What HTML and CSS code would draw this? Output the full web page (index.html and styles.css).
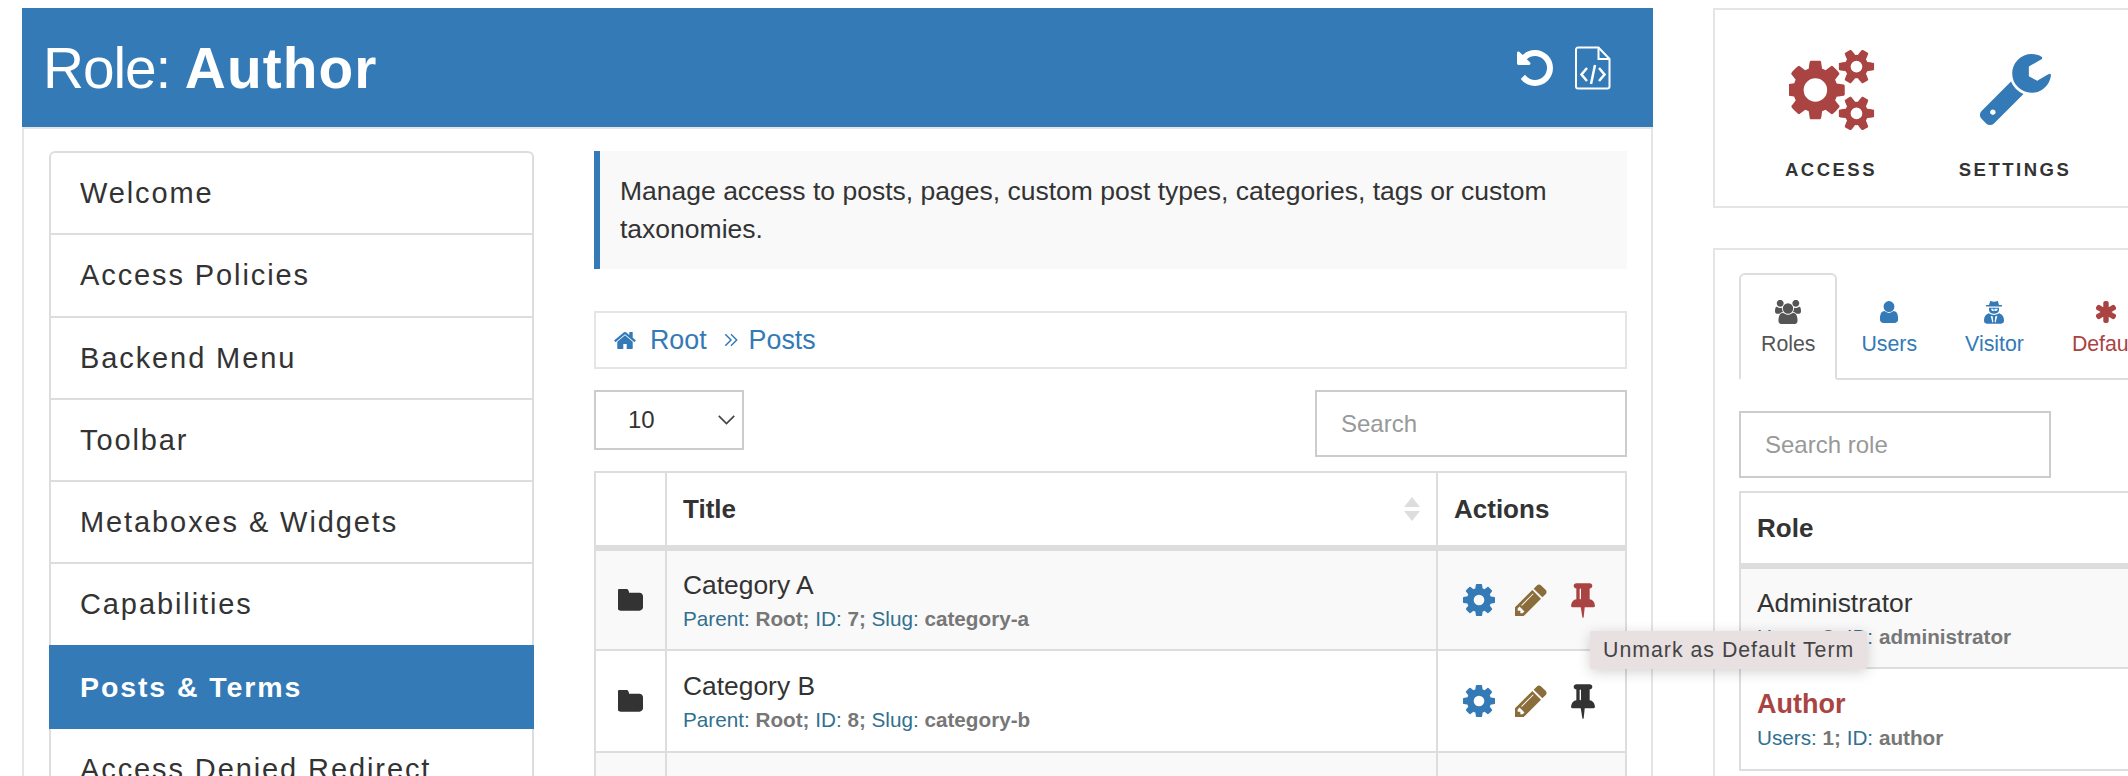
FILE: index.html
```html
<!DOCTYPE html>
<html lang="en">
<head>
  <meta charset="UTF-8">
  <title>Role: Author</title>
  <link rel="stylesheet" href="styles.css">
</head>
<body>
  <svg class="sprite" xmlns="http://www.w3.org/2000/svg">
    <symbol id="i-cog" viewBox="128 128 1536 1536"><path d="M1152 896q0-106-75-181t-181-75-181 75-75 181 75 181 181 75 181-75 75-181zm512-109v222q0 12-8 23t-20 13l-185 28q-19 54-39 91 35 50 107 138 10 12 10 25t-9 23q-27 37-99 108t-94 71q-12 0-26-9l-138-108q-44 23-91 38-16 136-29 186-7 28-36 28h-222q-14 0-24.500-8.500t-11.500-21.500l-28-184q-49-16-90-37l-141 107q-10 9-25 9-14 0-25-11-126-114-165-168-7-10-7-23 0-12 8-23 15-21 51-66.500t54-70.500q-27-50-41-99l-183-27q-13-2-21-12.500t-8-23.500v-222q0-12 8-23t19-13l186-28q14-46 39-92-40-57-107-138-10-12-10-24 0-10 9-23 26-36 98.500-107.500t94.500-71.500q13 0 26 10l138 107q44-23 91-38 16-136 29-186 7-28 36-28h222q14 0 24.500 8.500t11.500 21.500l28 184q49 16 90 37l142-107q9-9 24-9 13 0 25 10 129 119 165 170 7 8 7 22 0 12-8 23-15 21-51 66.500t-54 70.500q26 50 41 98l183 28q13 2 21 12.500t8 23.500z"/></symbol>
    <symbol id="i-pencil" viewBox="128 128 1536 1536"><path d="M491 1536l91-91-235-235-91 91v107h128v128h107zm523-928q0-22-22-22-10 0-17 7l-542 542q-7 7-7 17 0 22 22 22 10 0 17-7l542-542q7-7 7-17zm-54-192l416 416-832 832h-416v-416zm683 96q0 53-37 90l-166 166-416-416 166-165q36-38 90-38 53 0 91 38l235 234q37 39 37 91z"/></symbol>
    <symbol id="i-pin" viewBox="0 128 1152 1664"><path d="M480 864v-448q0-14-9-23t-23-9-23 9-9 23v448q0 14 9 23t23 9 23-9 9-23zm672 352q0 26-19 45t-45 19h-429l-51 483q-2 12-10.500 20.500t-20.500 8.500h-1q-27 0-32-27l-76-485h-404q-26 0-45-19t-19-45q0-123 78.500-221.500t177.500-98.500v-512q-52 0-90-38t-38-90 38-90 90-38h640q52 0 90 38t38 90-38 90-90 38v512q99 0 177.500 98.500t78.500 221.500z"/></symbol>
    <symbol id="i-folder" viewBox="0 192 1664 1408"><path d="M1600 648v704q0 92-66 158t-158 66h-1216q-92 0-158-66t-66-158v-960q0-92 66-158t158-66h320q92 0 158 66t66 158v32h672q92 0 158 66t66 158z"/></symbol>
    <symbol id="i-home" viewBox="0 192 1792 1408"><path d="M1472 992v480q0 26-19 45t-45 19h-384v-384h-256v384h-384q-26 0-45-19t-19-45v-480q0-1 .5-3t.5-3l575-474 575 474q1 2 1 6zm223-69l-62 74q-8 9-21 11h-3q-13 0-21-7l-692-577-692 577q-12 8-24 7-13-2-21-11l-62-74q-8-10-7-23.500t11-21.500l719-599q32-26 76-26t76 26l244 204v-195q0-14 9-23t23-9h192q14 0 23 9t9 23v408l219 182q10 8 11 21.500t-7 23.500z"/></symbol>
    <symbol id="i-undo" viewBox="128 128 1536 1536"><path d="M1664 896q0 156-61 298t-164 245-245 164-298 61q-172 0-327-72.500t-264-204.500q-7-10-6.500-22.500t8.500-20.500l137-138q10-9 25-9 16 2 23 12 73 95 179 147t225 52q104 0 198.500-40.500t163.500-109.500 109.500-163.500 40.500-198.500-40.500-198.500-109.500-163.500-163.500-109.500-198.500-40.500q-98 0-188 35.500t-160 101.500l137 138q31 30 14 69-17 40-59 40h-448q-26 0-45-19t-19-45v-448q0-42 40-59 39-17 69 14l130 129q107-101 244.500-156.500t284.500-55.500q156 0 298 61t245 164 164 245 61 298z"/></symbol>
    <symbol id="i-cogs" viewBox="0 128 1920 1536"><path d="M832 896q0-106-75-181t-181-75-181 75-75 181 75 181 181 75 181-75 75-181zm768 512q0-52-38-90t-90-38-90 38-38 90q0 53 37.500 90.500t90.500 37.500 90.500-37.500 37.500-90.500zm0-1024q0-52-38-90t-90-38-90 38-38 90q0 53 37.500 90.500t90.500 37.500 90.500-37.500 37.500-90.500zm-384 421v185q0 10-7 19.500t-16 10.500l-155 24q-11 35-32 76 34 48 90 115 7 11 7 20 0 12-7 19-23 30-82.500 89.500t-78.500 59.500q-11 0-21-7l-115-90q-37 19-77 31-11 108-23 155-7 24-30 24h-186q-11 0-20-7.500t-10-17.500l-23-153q-34-10-75-31l-118 89q-7 7-20 7-11 0-21-8-144-133-144-160 0-9 7-19 10-14 41-53t47-61q-23-44-35-82l-152-24q-10-1-17-9.500t-7-19.500v-185q0-10 7-19.500t16-10.500l155-24q11-35 32-76-34-48-90-115-7-11-7-20 0-12 7-20 22-30 82-89t79-59q11 0 21 7l115 90q34-18 77-32 11-108 23-154 7-24 30-24h186q11 0 20 7.500t10 17.500l23 153q34 10 75 31l118-89q8-7 20-7 11 0 21 8 144 133 144 160 0 8-7 19-12 16-42 54t-45 60q23 48 34 82l152 23q10 2 17 10.500t7 19.500zm640 533v140q0 16-149 31-12 27-30 52 51 113 51 138 0 4-4 7-122 71-124 71-8 0-46-47t-52-68q-20 2-30 2t-30-2q-14 21-52 68t-46 47q-2 0-124-71-4-3-4-7 0-25 51-138-18-25-30-52-149-15-149-31v-140q0-16 149-31 13-29 30-52-51-113-51-138 0-4 4-7 4-2 35-20t59-34 30-16q8 0 46 46.500t52 67.500q20-2 30-2t30 2q51-71 92-112l6-2q4 0 124 70 4 3 4 7 0 25-51 138 17 23 30 52 149 15 149 31zm0-1024v140q0 16-149 31-12 27-30 52 51 113 51 138 0 4-4 7-122 71-124 71-8 0-46-47t-52-68q-20 2-30 2t-30-2q-14 21-52 68t-46 47q-2 0-124-71-4-3-4-7 0-25 51-138-18-25-30-52-149-15-149-31v-140q0-16 149-31 13-29 30-52-51-113-51-138 0-4 4-7 4-2 35-20t59-34 30-16q8 0 46 46.500t52 67.500q20-2 30-2t30 2q51-71 92-112l6-2q4 0 124 70 4 3 4 7 0 25-51 138 17 23 30 52 149 15 149 31z"/></symbol>
    <symbol id="i-wrench" viewBox="64 128 1664 1664"><path d="M448 1472q0-26-19-45t-45-19-45 19-19 45 19 45 45 19 45-19 19-45zm644-420l-682 682q-37 37-90 37-52 0-91-37l-106-108q-38-36-38-90 0-53 38-91l681-681q39 98 114.500 173.500t173.500 114.500zm634-435q0 39-23 106-47 134-164.500 217.500t-258.500 83.500q-185 0-316.500-131.500t-131.500-316.500 131.500-316.500 316.500-131.500q58 0 121.500 16.500t107.500 46.500q16 11 16 28t-16 28l-293 169v224l193 107q5-3 79-48.500t135.500-81 70.500-35.500q15 0 23.500 10t8.500 25z"/></symbol>
    <symbol id="i-users" viewBox="0 128 1920 1536"><path d="M593 896q-162 5-265 128h-134q-82 0-138-40.500t-56-118.500q0-353 124-353 6 0 43.500 21t97.500 42.500 119 21.500q67 0 133-23-5 37-5 66 0 139 81 256zm1071 637q0 120-73 189.500t-194 69.500h-874q-121 0-194-69.500t-73-189.500q0-53 3.500-103.500t14-109 26.500-108.500 43-97.500 62-81 85.500-53.500 111.500-20q10 0 43 21.500t73 48 107 48 135 21.500 135-21.500 107-48 73-48 43-21.500q61 0 111.500 20t85.500 53.500 62 81 43 97.500 26.500 108.500 14 109 3.500 103.500zm-1024-1277q0 106-75 181t-181 75-181-75-75-181 75-181 181-75 181 75 75 181zm704 384q0 159-112.500 271.500t-271.500 112.500-271.500-112.500-112.500-271.500 112.500-271.500 271.500-112.500 271.500 112.500 112.500 271.500zm576 225q0 78-56 118.500t-138 40.500h-134q-103-123-265-128 81-117 81-256 0-29-5-66 66 23 133 23 59 0 119-21.500t97.500-42.500 43.500-21q124 0 124 353zm-128-609q0 106-75 181t-181 75-181-75-75-181 75-181 181-75 181 75 75 181z"/></symbol>
    <symbol id="i-user" viewBox="128 128 1408 1536"><path d="M1536 1399q0 109-62.500 187t-150.500 78h-854q-88 0-150.500-78t-62.500-187q0-85 8.500-160.500t31.500-152 58.500-131 94-89 134.500-34.500q131 128 313 128t313-128q76 0 134.500 34.500t94 89 58.500 131 31.500 152 8.500 160.500zm-256-887q0 159-112.500 271.500t-271.500 112.500-271.500-112.500-112.500-271.500 112.500-271.500 271.500-112.500 271.500 112.500 112.500 271.500z" transform="translate(-64 0)"/></symbol>
    <symbol id="i-secret" viewBox="0 0 24 28"><path fill-rule="evenodd" d="M7.500 .5C9 1.200 10.500 1.600 12 1.600S15 1.200 16.500 .5L18 5.500h3.500v2h-19v-2H6zM6 8.800h12v2.700c0 2.700-2.500 4.700-6 4.700s-6-2-6-4.700zM7.600 10.200h3.400l.5 1h1l.5-1h3.400c0 1.600-1 2.700-2.200 2.700-.8 0-1.300-.7-1.800-.7s-1 .7-1.800.7c-1.200 0-2-1.100-2-2.700zM5.800 15.500C8 17 10 17.500 12 17.500s4-.5 6.200-2c3.500 1 5.800 3.800 5.800 8.500 0 2.500-1 4-3.500 4h-17C1 28 0 26.500 0 24c0-4.700 2.300-7.500 5.800-8.500zM8 18.800l2.400.3.8 6.700-1 1zM16 18.800l-2.400.3-.8 6.700 1 1z"/></symbol>
    <symbol id="i-asterisk" viewBox="192 128 1408 1536"><path d="M1546 1050q46 26 59.500 77.500t-12.500 97.500l-64 110q-26 46-77.500 59.500t-97.500-12.500l-266-153v307q0 52-38 90t-90 38h-128q-52 0-90-38t-38-90v-307l-266 153q-46 26-97.500 12.500t-77.500-59.500l-64-110q-26-46-12.500-97.500t59.500-77.500l266-154-266-154q-46-26-59.500-77.500t12.500-97.500l64-110q26-46 77.500-59.500t97.500 12.500l266 153v-307q0-52 38-90t90-38h128q52 0 90 38t38 90v307l266-153q46-26 97.500-12.500t77.500 59.500l64 110q26 46 12.500 97.500t-59.500 77.500l-266 154z"/></symbol>
  </svg>

  <div class="page">
    <div class="main-panel">
      <div class="role-head">
        <h1>Role: <strong>Author</strong></h1>
        <div class="head-actions">
          <svg class="icon-undo"><use href="#i-undo"/></svg>
          <svg class="icon-file" viewBox="0 0 36 44" fill="none" stroke="#fff" stroke-width="2">
            <path d="M3 1.500h20.500l11 11.500v27.500a2 2 0 0 1-2 2H3a2 2 0 0 1-2-2v-37a2 2 0 0 1 2-2z"/>
            <path d="M23.500 1.500v11.500h11" stroke-width="2"/>
            <path d="M12 22l-5.500 6.500 5.500 6.500M24 22l5.500 6.500-5.500 6.500M20 19l-4 19" stroke-width="2.500"/>
          </svg>
        </div>
      </div>
      <div class="panel-body">
        <ul class="side-menu">
          <li>Welcome</li>
          <li>Access Policies</li>
          <li>Backend Menu</li>
          <li>Toolbar</li>
          <li>Metaboxes &amp; Widgets</li>
          <li>Capabilities</li>
          <li class="active">Posts &amp; Terms</li>
          <li>Access Denied Redirect</li>
        </ul>
        <div class="content">
          <p class="notice">Manage access to posts, pages, custom post types, categories, tags or custom taxonomies.</p>
          <div class="crumbs">
            <svg class="icon-home"><use href="#i-home"/></svg>
            <span>Root</span>
            <svg class="icon-sep" viewBox="0 0 14 14" fill="none" stroke="#337ab7" stroke-width="1.300"><path d="M2 2l5 5-5 5M7 2l5 5-5 5"/></svg>
            <span>Posts</span>
          </div>
          <div class="table-tools">
            <div class="fake-select">10
              <svg viewBox="0 0 16 10" fill="none" stroke="#444" stroke-width="1.400"><path d="M1.500 1.500L8 8l6.500-6.500"/></svg>
            </div>
            <input class="search" type="text" placeholder="Search">
          </div>
          <table class="grid">
            <thead>
              <tr>
                <th class="col-icon"></th>
                <th class="col-title">Title
                  <span class="sort"><i class="up"></i><i class="down"></i></span>
                </th>
                <th class="col-actions">Actions</th>
              </tr>
            </thead>
            <tbody>
              <tr class="odd">
                <td class="cell-icon"><svg class="icon-folder"><use href="#i-folder"/></svg></td>
                <td>
                  <div class="name">Category A</div>
                  <small>Parent: <b>Root;</b> ID: <b>7;</b> Slug: <b>category-a</b></small>
                </td>
                <td>
                  <div class="actions">
                    <svg class="act blue"><use href="#i-cog"/></svg>
                    <svg class="act brown"><use href="#i-pencil"/></svg>
                    <svg class="act-pin red"><use href="#i-pin"/></svg>
                  </div>
                </td>
              </tr>
              <tr>
                <td class="cell-icon"><svg class="icon-folder"><use href="#i-folder"/></svg></td>
                <td>
                  <div class="name">Category B</div>
                  <small>Parent: <b>Root;</b> ID: <b>8;</b> Slug: <b>category-b</b></small>
                </td>
                <td>
                  <div class="actions">
                    <svg class="act blue"><use href="#i-cog"/></svg>
                    <svg class="act brown"><use href="#i-pencil"/></svg>
                    <svg class="act-pin dark"><use href="#i-pin"/></svg>
                  </div>
                </td>
              </tr>
              <tr class="odd">
                <td class="cell-icon"></td>
                <td>
                  <div class="name">Uncategorized</div>
                  <small>Parent: <b>Root;</b> ID: <b>1;</b> Slug: <b>uncategorized</b></small>
                </td>
                <td></td>
              </tr>
            </tbody>
          </table>
        </div>
      </div>
    </div>

    <div class="side-col">
      <div class="card nav-card">
        <div class="nav-item">
          <svg class="icon-cogs"><use href="#i-cogs"/></svg>
          <span>ACCESS</span>
        </div>
        <div class="nav-item">
          <svg class="icon-wrench"><use href="#i-wrench"/></svg>
          <span>SETTINGS</span>
        </div>
      </div>
      <div class="card subject-card">
        <div class="tabs">
          <div class="tab current"><svg class="tab-users"><use href="#i-users"/></svg>Roles</div>
          <div class="tab"><svg class="tab-user"><use href="#i-user"/></svg>Users</div>
          <div class="tab"><svg class="tab-secret"><use href="#i-secret"/></svg>Visitor</div>
          <div class="tab danger"><svg class="tab-star"><use href="#i-asterisk"/></svg>Default</div>
        </div>
        <input class="search role-search" type="text" placeholder="Search role">
        <table class="grid role-grid">
          <thead>
            <tr><th>Role</th></tr>
          </thead>
          <tbody>
            <tr class="odd">
              <td>
                <div class="name">Administrator</div>
                <small>Users: <b>2;</b> ID: <b>administrator</b></small>
              </td>
            </tr>
            <tr>
              <td>
                <div class="name current-role">Author</div>
                <small>Users: <b>1;</b> ID: <b>author</b></small>
              </td>
            </tr>
          </tbody>
        </table>
      </div>
    </div>
  </div>

  <div class="tip">Unmark as Default Term</div>
</body>
</html>
```

FILE: styles.css
```css
html, body {
  height: 100%;
  overflow: hidden;
}
body {
  margin: 0;
  font-family: "Liberation Sans", Arial, sans-serif;
  font-size: 24px;
  color: #333;
  background: #fff;
}
.sprite {
  display: none;
}
.page {
  display: flex;
  gap: 60px;
  padding: 8px 0 0 22px;
  width: 2800px;
}

/* main panel */
.main-panel {
  width: 1631px;
  flex: none;
  border: 2px solid #e5e5e5;
  border-top: 0;
  box-sizing: border-box;
}
.role-head {
  display: flex;
  align-items: center;
  justify-content: space-between;
  height: 121px;
  margin: 0 -2px;
  padding: 0 42px 0 21px;
  background: #337ab7;
  border-bottom: 2px solid #e5e5e5;
  box-sizing: border-box;
  color: #fff;
}
.role-head h1 {
  margin: 2px 0 0;
  font-size: 56.800px;
  font-weight: 400;
  letter-spacing: -1.100px;
}
.role-head strong {
  letter-spacing: 1.100px;
}
.head-actions {
  display: flex;
  align-items: center;
  gap: 22px;
}
.icon-undo {
  width: 36px;
  height: 36px;
  fill: #fff;
}
.icon-file {
  width: 36px;
  height: 44px;
}
.panel-body {
  display: flex;
  gap: 60px;
  padding: 22px 24px 0 25px;
}

/* side menu */
.side-menu {
  flex: none;
  width: 485px;
  margin: 0;
  padding: 0;
  list-style: none;
  border: 2px solid #ddd;
  border-bottom: 0;
  border-radius: 6px 6px 0 0;
  box-sizing: border-box;
}
.side-menu li {
  height: 82.300px;
  line-height: 80px;
  padding-left: 29px;
  border-bottom: 2px solid #ddd;
  box-sizing: border-box;
  font-size: 29px;
  letter-spacing: 1.900px;
}
.side-menu li.active {
  margin: -2px -2px 0;
  height: 84px;
  padding-left: 31px;
  border: 0;
  background: #337ab7;
  color: #fff;
  font-weight: 700;
  font-size: 28.500px;
  line-height: 84px;
}

/* content */
.content {
  flex: 1;
  min-width: 0;
}
.notice {
  margin: 0 0 42px;
  padding: 21px 20px;
  border-left: 6px solid #337ab7;
  background: #f9f9f9;
  font-size: 26.500px;
  line-height: 38px;
}
.crumbs {
  display: flex;
  align-items: center;
  height: 58px;
  padding-left: 17px;
  border: 2px solid #e5e5e5;
  box-sizing: border-box;
  color: #337ab7;
  font-size: 26.800px;
}
.icon-home {
  width: 24px;
  height: 19px;
  margin-right: 13px;
  fill: #337ab7;
}
.icon-sep {
  width: 16px;
  height: 16px;
  margin: 0 10px 0 16px;
}
.table-tools {
  display: flex;
  justify-content: space-between;
  align-items: flex-start;
  margin: 21px 0 14px;
}
.fake-select {
  display: flex;
  align-items: center;
  justify-content: space-between;
  width: 150px;
  height: 60px;
  padding: 0 6px 0 32px;
  border: 2px solid #ccc;
  box-sizing: border-box;
  font-size: 24px;
}
.fake-select svg {
  width: 19px;
  height: 12px;
}
.search {
  width: 312px;
  height: 67px;
  padding: 0 24px;
  border: 2px solid #ccc;
  border-radius: 0;
  outline: none;
  box-sizing: border-box;
  font-family: inherit;
  font-size: 24px;
  color: #555;
}
.search::placeholder {
  color: #999;
}

/* tables */
.grid {
  width: 100%;
  border-collapse: collapse;
  table-layout: fixed;
}
.grid th,
.grid td {
  padding: 0 16px;
  border: 2px solid #ddd;
  box-sizing: border-box;
  text-align: left;
  vertical-align: middle;
}
.grid th {
  height: 76px;
  border-bottom-width: 6px;
  font-size: 26px;
}
.grid td {
  height: 102px;
}
.grid .odd {
  background: #f9f9f9;
}
.col-icon {
  width: 71px;
}
.col-actions {
  width: 189px;
}
.cell-icon {
  text-align: center !important;
}
.col-title {
  position: relative;
}
.sort i {
  position: absolute;
  right: 16px;
  width: 0;
  height: 0;
  border-left: 8px solid transparent;
  border-right: 8px solid transparent;
}
.sort .up {
  top: 24px;
  border-bottom: 10px solid #ddd;
}
.sort .down {
  top: 38px;
  border-top: 10px solid #ddd;
}
.icon-folder {
  display: block;
  width: 26px;
  height: 22px;
  margin: 0 auto;
  fill: #333;
}
.name {
  font-size: 26.400px;
  line-height: 34px;
}
.grid small {
  display: block;
  margin-top: 3px;
  font-size: 20.700px;
  line-height: 28px;
  color: #31708f;
}
.grid small b {
  color: #777;
}
.actions {
  display: flex;
  align-items: center;
  gap: 20px;
  padding-left: 9px;
}
.act {
  width: 32px;
  height: 32px;
}
.act-pin {
  width: 24px;
  height: 35px;
  margin-left: 4px;
}
.blue { fill: #337ab7; }
.brown { fill: #8a6d3b; }
.red { fill: #a94442; }
.dark { fill: #333; }

/* right column */
.side-col {
  flex: none;
  width: 900px;
  display: flex;
  flex-direction: column;
  gap: 40px;
}
.card {
  border: 2px solid #e5e5e5;
  box-sizing: border-box;
}
.nav-card {
  display: flex;
  height: 200px;
  padding-left: 24px;
}
.nav-item {
  display: flex;
  flex-direction: column;
  align-items: center;
  width: 184px;
  padding-top: 40px;
  box-sizing: border-box;
  font-size: 18.500px;
  font-weight: 700;
  letter-spacing: 2.500px;
}
.icon-cogs {
  width: 88px;
  height: 80px;
  margin-left: 3px;
  fill: #a94442;
}
.icon-wrench {
  width: 72px;
  height: 72px;
  margin: 4px 0 4px;
  fill: #337ab7;
}
.nav-item span {
  margin-top: 29px;
}
.subject-card {
  padding: 23px 24px 0;
  height: 800px;
}
.tabs {
  display: flex;
  height: 107px;
  border-bottom: 2px solid #ddd;
  box-sizing: border-box;
}
.tab {
  display: flex;
  flex-direction: column;
  align-items: center;
  height: 107px;
  padding: 27px 24px 0;
  box-sizing: border-box;
  color: #337ab7;
  font-size: 21.300px;
  line-height: 30px;
}
.tab svg {
  fill: currentColor;
  margin-bottom: 5px;
}
.tab.current {
  border: 2px solid #ddd;
  border-bottom-color: #fff;
  border-radius: 6px 6px 0 0;
  padding: 25px 20px 0;
  color: #555;
}
.tab.danger {
  color: #a94442;
}
.tab-users {
  width: 26px;
  height: 24px;
}
.tab-user {
  width: 20px;
  height: 24px;
}
.tab-secret {
  width: 20px;
  height: 24px;
}
.tab-star {
  width: 20px;
  height: 24px;
}
.role-search {
  display: block;
  margin: 31px 0 13px;
}
.role-grid th {
  height: 74px;
}
.current-role {
  color: #a94442;
  font-weight: 700;
  font-size: 27px;
}

/* tooltip */
.tip {
  position: absolute;
  left: 1590px;
  top: 631px;
  height: 38px;
  padding: 0 13px;
  line-height: 38px;
  background: #e8e0e1;
  border-radius: 2px;
  box-shadow: 0 3px 14px rgba(0, 0, 0, 0.18);
  font-size: 21.300px;
  letter-spacing: 1px;
  color: #444;
  white-space: nowrap;
}
```
